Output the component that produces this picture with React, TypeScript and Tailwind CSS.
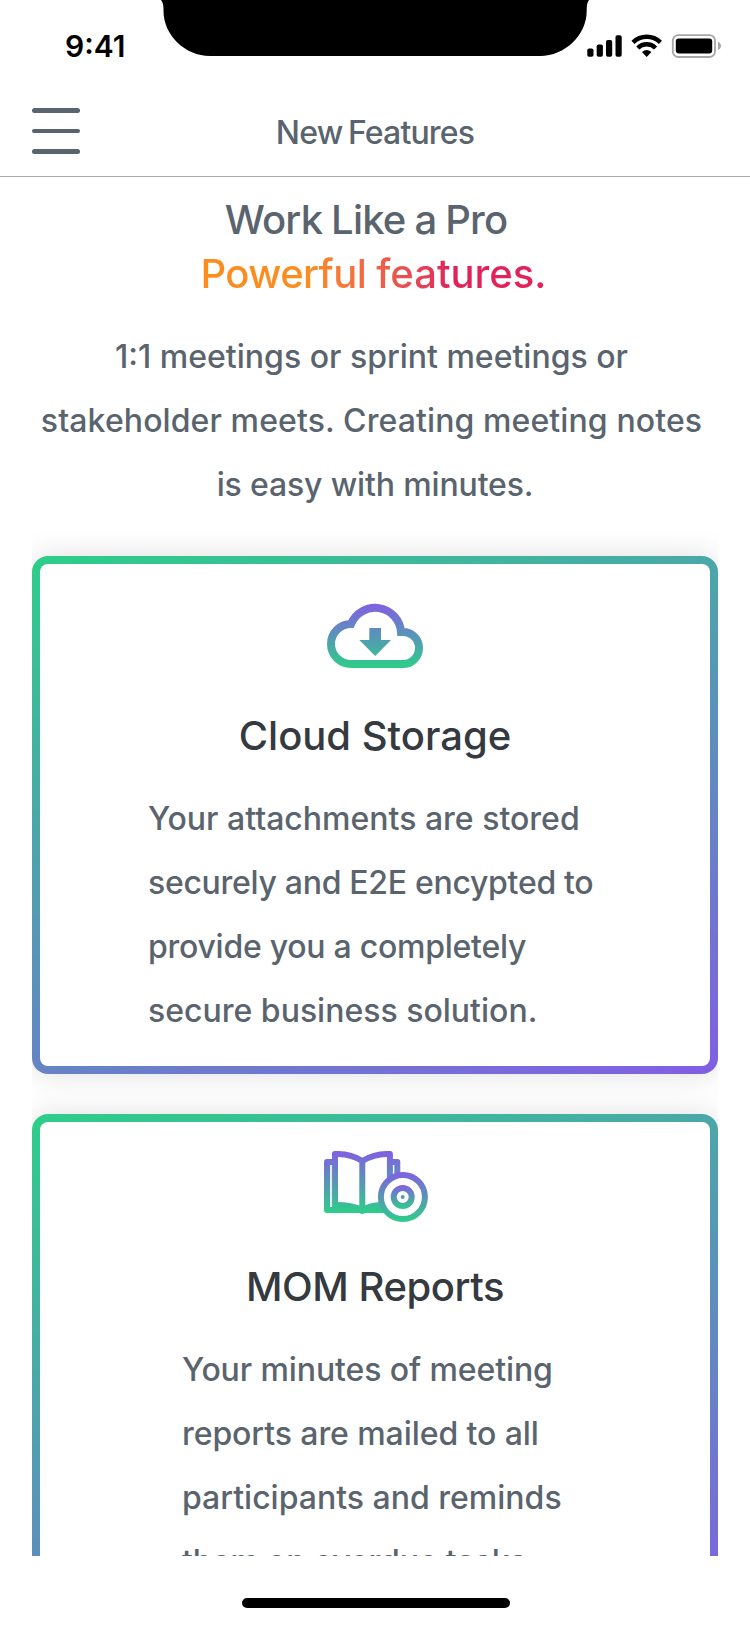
import React from "react";

function StatusBar() {
  return (
    <div className="flex h-[88px] items-start">
      <div className="w-[161px] shrink-0 pl-[65px] pt-[28px] text-[30px] font-semibold leading-[36px] text-black">
        9:41
      </div>
      <svg className="shrink-0" width="428" height="56" viewBox="0 0 428 56" fill="#000">
        <path d="M0 0H428Q425.700 3 425.700 9V11C425.700 35 404 56 379 56H49C24 56 2.500 35 2.500 11V9Q2.500 3 0 0Z" />
      </svg>
      <svg className="shrink-0" width="161" height="88" viewBox="589 0 161 88" overflow="visible">
        <rect x="587.300" y="48.500" width="6.200" height="8.200" rx="1.800" />
        <rect x="596.700" y="44.500" width="6.200" height="12.200" rx="1.800" />
        <rect x="606" y="40" width="6.200" height="16.700" rx="1.800" />
        <rect x="615.500" y="35.200" width="6.200" height="21.500" rx="1.800" />
        <g fill="none" stroke="#000" strokeWidth="4.400">
          <path d="M633 42.400A19.500 19.500 0 0 1 660.400 42.400" />
          <path d="M637.800 48A12.500 12.500 0 0 1 655.600 48" />
        </g>
        <path d="M646.700 57L642 52Q646.700 48 651.400 52Z" />
        <rect x="672.800" y="35.100" width="42.200" height="21.900" rx="5.500" fill="none" stroke="#a6a6a6" strokeWidth="1.800" />
        <rect x="675.800" y="38.400" width="36.400" height="15" rx="2.800" />
        <path d="M718 41.700C722 43.500 722 48.200 718 50Z" fill="#a6a6a6" />
      </svg>
    </div>
  );
}

function NavBar() {
  return (
    <div className="grid h-[89px] shrink-0 grid-cols-[80px_1fr_80px] items-start border-b border-[#a9acaf] pl-8 pr-8">
      <div className="flex w-12 flex-col gap-4 pt-5">
        <span className="h-[4.500px] rounded-full bg-[#5a646e]" />
        <span className="h-[4.500px] rounded-full bg-[#5a646e]" />
        <span className="h-[4.500px] rounded-full bg-[#5a646e]" />
      </div>
      <h1 className="whitespace-nowrap pt-[25px] text-center text-[32px] font-medium leading-[40px] tracking-[-0.85px] [word-spacing:-2px]">
        New Features
      </h1>
    </div>
  );
}

function CloudIcon() {
  return (
    <svg width="130" height="90" viewBox="0 0 130 90">
      <defs>
        <linearGradient id="cloud" gradientUnits="userSpaceOnUse" x1="0" y1="14" x2="0" y2="78">
          <stop stopColor="#825ee4" />
          <stop offset="1" stopColor="#2dce89" />
        </linearGradient>
      </defs>
      <path
        d="M41 74A20 20 0 0 1 41 34A26 26 0 0 1 91 42H93A16 16 0 0 1 93 74Z"
        fill="none"
        stroke="url(#cloud)"
        strokeWidth="8"
      />
      <path d="M59.300 38H71V50H81L65.200 66L49.300 50H59.300Z" fill="url(#cloud)" />
    </svg>
  );
}

function ReportIcon() {
  return (
    <svg width="130" height="100" viewBox="0 0 130 100">
      <defs>
        <linearGradient id="book" gradientUnits="userSpaceOnUse" x1="0" y1="16" x2="0" y2="78">
          <stop stopColor="#825ee4" />
          <stop offset="1" stopColor="#2dce89" />
        </linearGradient>
        <linearGradient id="ring" gradientUnits="userSpaceOnUse" x1="0" y1="37" x2="0" y2="87">
          <stop stopColor="#825ee4" />
          <stop offset="1" stopColor="#2dce89" />
        </linearGradient>
        <linearGradient id="hub" gradientUnits="userSpaceOnUse" x1="0" y1="50" x2="0" y2="74">
          <stop stopColor="#825ee4" />
          <stop offset="1" stopColor="#2dce89" />
        </linearGradient>
      </defs>
      <g fill="none" stroke="url(#book)" strokeWidth="6" strokeLinejoin="round" strokeLinecap="round">
        <path d="M24 26.900H17V75H76" />
        <path d="M80 26.900H87.300V44" />
        <path d="M25 71V19Q40 18 52.300 26Q65 18 79.900 19V50" />
        <path d="M52.300 26V76" />
        <path d="M25 70Q42 70 52.300 75Q60 70.500 72 70" />
        <path d="M27 73.500H74" />
      </g>
      <path d="M21.200 30V71" stroke="#dfe6f2" strokeWidth="1.800" />
      <circle cx="92.900" cy="62" r="22" fill="#fff" stroke="url(#ring)" strokeWidth="6" />
      <circle cx="92.700" cy="62" r="9" fill="none" stroke="url(#hub)" strokeWidth="6" />
      <circle cx="92.700" cy="62" r="2" fill="url(#hub)" />
    </svg>
  );
}

function FeatureCard({ children }: { children: React.ReactNode }) {
  return (
    <article className="rounded-2xl bg-[linear-gradient(159deg,#2dce89,#825ee4)] p-2 shadow-[0_0_30px_rgba(0,0,0,0.13)]">
      <div className="flex h-[502px] flex-col items-center rounded-[8px] bg-white">{children}</div>
    </article>
  );
}

export default function App() {
  return (
    <div className="flex h-[1640px] w-[750px] flex-col overflow-hidden bg-white font-['Inter','Liberation_Sans',sans-serif] text-[#5a646e]">
      <StatusBar />
      <NavBar />
      <main className="mx-8 h-[1379px] w-[686px] shrink-0 overflow-hidden pt-[16px] font-medium">
        <h2 className="whitespace-nowrap text-center text-[40px] leading-[54px]">
          <span className="block pr-[18px] tracking-[-0.8px] [word-spacing:-1px]">Work Like a Pro</span>
          <span className="block pr-[3px]">
            <span className="inline-block bg-linear-to-r from-[#fb8c1e] from-31% to-[#e1235a] to-72% bg-clip-text text-transparent">
              <span className="tracking-[-0.600px]">Powerful </span>
              <span>features.</span>
            </span>
          </span>
        </h2>
        <p className="mt-6 whitespace-nowrap text-center text-[32px] leading-[64px]">
          <span className="block pr-[7px]">1:1 meetings or sprint meetings or</span>
          <span className="block pr-[7px] tracking-[0.1px]">stakeholder meets. Creating meeting notes</span>
          <span className="block tracking-[-0.15px]">is easy with minutes.</span>
        </p>
        <section className="mt-[39px] flex flex-col gap-10">
          <FeatureCard>
            <div className="mt-[26px] h-[90px]">
              <CloudIcon />
            </div>
            <h3 className="mt-[29px] text-[40px] leading-[54px] text-[#343a40]">Cloud Storage</h3>
            <p className="mt-[24px] w-[454px] whitespace-nowrap text-[32px] leading-[64px]">
              <span className="block">Your attachments are stored</span>
              <span className="block tracking-[-0.3px]">securely and E2E encypted to</span>
              <span className="block tracking-[-0.26px]">provide you a completely</span>
              <span className="block">secure business solution.</span>
            </p>
          </FeatureCard>
          <FeatureCard>
            <div className="mt-[13px] h-[100px]">
              <ReportIcon />
            </div>
            <h3 className="mt-[25px] text-[40px] leading-[54px] tracking-[-0.45px] text-[#343a40]">MOM Reports</h3>
            <p className="mt-[24px] w-[386px] whitespace-nowrap text-[32px] leading-[64px]">
              <span className="block tracking-[-0.1px]">Your minutes of meeting</span>
              <span className="block tracking-[-0.08px]">reports are mailed to all</span>
              <span className="block">participants and reminds</span>
              <span className="block tracking-[-0.17px]">them on overdue tasks.</span>
            </p>
          </FeatureCard>
        </section>
      </main>
      <footer className="flex justify-center pl-[2px] pt-[42px]">
        <div className="h-[10px] w-[268px] rounded-full bg-black" />
      </footer>
    </div>
  );
}
